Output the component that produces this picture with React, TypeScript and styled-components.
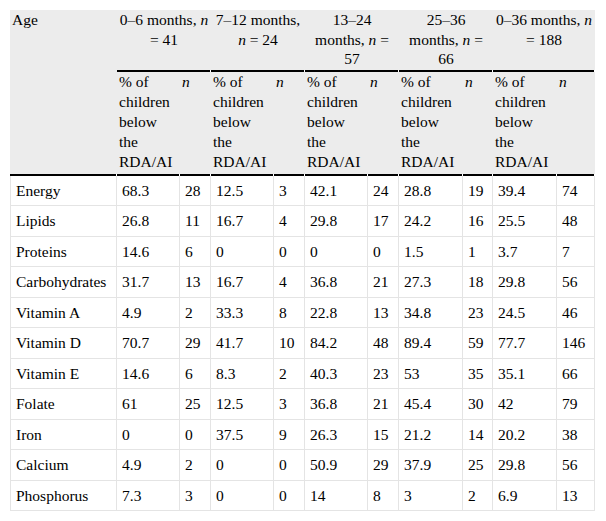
import React from 'react';
import styled, {createGlobalStyle} from "styled-components";

const serif = `"Liberation Serif", "Times New Roman", Tinos, "Nimbus Roman", "Nimbus Roman No9 L", FreeSerif, "DejaVu Serif", serif`;

const GlobalStyle = createGlobalStyle`
    body {
        margin: 0;
        background: #fff;
        font-family: ${serif};
        color: #000;
    }
`

const Page = styled.div`
    padding: 10px 11px 10px 10px;
`

const Table = styled.table`
    width: 585px;
    table-layout: fixed;
    border-collapse: separate;
    border-spacing: 0;
    font-family: ${serif};
    font-size: 15.5px;
    color: #000;
`

const HeadCell = styled.th<{ $center?: boolean }>`
    padding: 0 2px 3px;
    line-height: 19.5px;
    font-family: ${serif};
    font-weight: normal;
    text-align: ${props => props.$center ? 'center' : 'left'};
    vertical-align: top;
    background-color: #ececec;
    background-image: linear-gradient(to right, #000 calc(100% - 1px), #fff calc(100% - 1px));
    background-size: 100% 2px;
    background-position: left bottom;
    background-repeat: no-repeat;
`

const SubHeadCell = styled(HeadCell)`
    line-height: 20px;
    padding-bottom: 4px;
`

const Cell = styled.td`
    padding: 5px 5px;
    line-height: 19.5px;
    font-family: ${serif};
    vertical-align: top;
    border-right: 1px solid #e4e4e4;
    border-bottom: 1px solid #e4e4e4;

    &:first-child {
        border-left: 1px solid #e4e4e4;
    }
`

const widths = [107, 63, 31, 63, 31, 63, 31, 64, 30, 64, 38];

const groups = [
    <>0–6 months, <i>n</i> = 41</>,
    <>7–12 months, <i>n</i> = 24</>,
    <>13–24 months, <i>n</i> = 57</>,
    <>25–36 months, <i>n</i> = 66</>,
    <>0–36 months, <i>n</i> = 188</>,
];

const rows: [string, ...string[]][] = [
    ['Energy', '68.3', '28', '12.5', '3', '42.1', '24', '28.8', '19', '39.4', '74'],
    ['Lipids', '26.8', '11', '16.7', '4', '29.8', '17', '24.2', '16', '25.5', '48'],
    ['Proteins', '14.6', '6', '0', '0', '0', '0', '1.5', '1', '3.7', '7'],
    ['Carbohydrates', '31.7', '13', '16.7', '4', '36.8', '21', '27.3', '18', '29.8', '56'],
    ['Vitamin A', '4.9', '2', '33.3', '8', '22.8', '13', '34.8', '23', '24.5', '46'],
    ['Vitamin D', '70.7', '29', '41.7', '10', '84.2', '48', '89.4', '59', '77.7', '146'],
    ['Vitamin E', '14.6', '6', '8.3', '2', '40.3', '23', '53', '35', '35.1', '66'],
    ['Folate', '61', '25', '12.5', '3', '36.8', '21', '45.4', '30', '42', '79'],
    ['Iron', '0', '0', '37.5', '9', '26.3', '15', '21.2', '14', '20.2', '38'],
    ['Calcium', '4.9', '2', '0', '0', '50.9', '29', '37.9', '25', '29.8', '56'],
    ['Phosphorus', '7.3', '3', '0', '0', '14', '8', '3', '2', '6.9', '13'],
];

const App = () => {
    return (
        <Page>
            <GlobalStyle/>
            <Table>
                <colgroup>
                    {widths.map((w, i) => <col key={i} style={{width: w}}/>)}
                </colgroup>
                <thead>
                <tr>
                    <HeadCell rowSpan={2}>Age</HeadCell>
                    {groups.map((g, i) => (
                        <HeadCell key={i} colSpan={2} $center>{g}</HeadCell>
                    ))}
                </tr>
                <tr>
                    {groups.map((_, i) => (
                        <React.Fragment key={i}>
                            <SubHeadCell>% of children below the RDA/AI</SubHeadCell>
                            <SubHeadCell><i>n</i></SubHeadCell>
                        </React.Fragment>
                    ))}
                </tr>
                </thead>
                <tbody>
                {rows.map(row => (
                    <tr key={row[0]}>
                        {row.map((v, i) => <Cell key={i}>{v}</Cell>)}
                    </tr>
                ))}
                </tbody>
            </Table>
        </Page>
    );
};

export default App;
